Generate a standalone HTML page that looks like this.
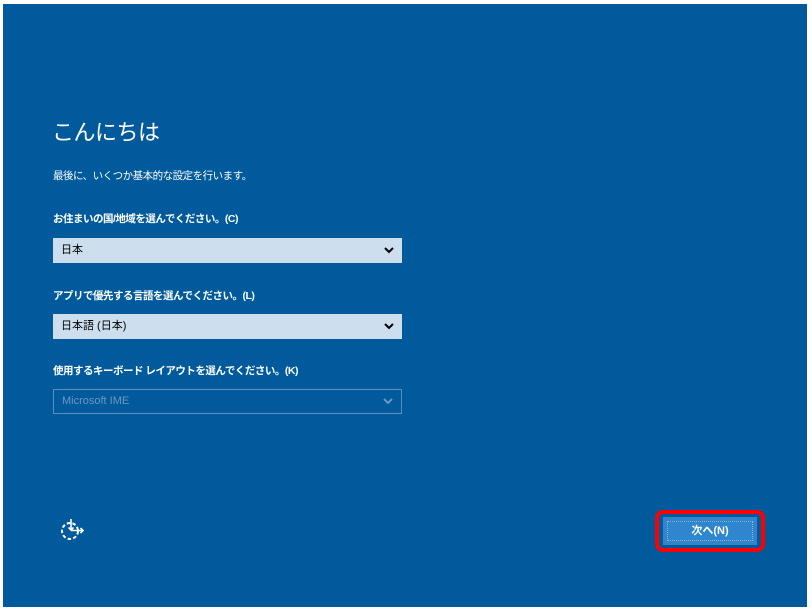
<!DOCTYPE html>
<html><head><meta charset="utf-8"><style>
body{margin:0;width:812px;height:611px;background:#fff;position:relative;overflow:hidden;font-family:"Liberation Sans","Noto Sans CJK JP",sans-serif;}
#bg{position:absolute;left:3px;top:4px;width:804px;height:603px;background:#005a9c;}
.t{position:absolute;color:#fff;white-space:nowrap;}
.l{font-size:10.5px;font-weight:bold;letter-spacing:-0.5px;}
.sel{position:absolute;left:53px;width:349px;height:25px;background:#cddfee;color:#000;font-size:11px;line-height:25px;box-sizing:border-box;padding-left:8px;}
.sel svg{position:absolute;right:8px;top:9px;}
</style></head><body>
<div id="bg"></div>
<div class="t" style="left:52px;top:115px;font-size:22px;letter-spacing:-0.5px;">こんにちは</div>
<div class="t" style="left:53px;top:168px;font-size:10.5px;letter-spacing:-0.5px;">最後に、いくつか基本的な設定を行います。</div>
<div class="t l" style="left:53px;top:211px;">お住まいの国/地域を選んでください。(C)</div>
<div class="sel" style="top:238px;">日本<svg width="10" height="7" viewBox="0 0 10 7"><path d="M1 1l4 4 4-4" stroke="#000" stroke-width="2" fill="none"/></svg></div>
<div class="t l" style="left:53px;top:288px;">アプリで優先する言語を選んでください。(L)</div>
<div class="sel" style="top:314px;">日本語 (日本)<svg width="10" height="7" viewBox="0 0 10 7"><path d="M1 1l4 4 4-4" stroke="#000" stroke-width="2" fill="none"/></svg></div>
<div class="t l" style="left:53px;top:363px;">使用するキーボード レイアウトを選んでください。(K)</div>
<div class="sel" style="top:389px;background:transparent;border:1px solid #5a8dbb;color:#6d97c0;line-height:23px;">Microsoft IME<svg width="10" height="7" viewBox="0 0 10 7" style="top:8px"><path d="M1 1l4 4 4-4" stroke="#6d97c0" stroke-width="2" fill="none"/></svg></div>
<svg style="position:absolute;left:58px;top:518px" width="30" height="26" viewBox="0 0 30 26">
<circle cx="12" cy="13" r="8" stroke="#fff" stroke-width="2" fill="none" stroke-dasharray="3.5 2.2"/>
<path d="M13 1v11M10.5 9.5l2.5 2.5 2.5-2.5M13 12.5h12M22.5 10l2.5 2.5-2.5 2.5" stroke="#fff" stroke-width="1.6" fill="none"/>
</svg>
<div style="position:absolute;left:655px;top:510px;width:110px;height:42px;box-sizing:border-box;border:4px solid #f00;border-radius:8px;"></div>
<div style="position:absolute;left:663px;top:517px;width:94px;height:28px;background:#2e86cf;"></div>
<div style="position:absolute;left:667px;top:521px;width:86px;height:20px;box-sizing:border-box;border:1px dotted #aab;color:#fff;font-size:11px;font-weight:bold;text-align:center;line-height:18px;">次へ(N)</div>
</body></html>
